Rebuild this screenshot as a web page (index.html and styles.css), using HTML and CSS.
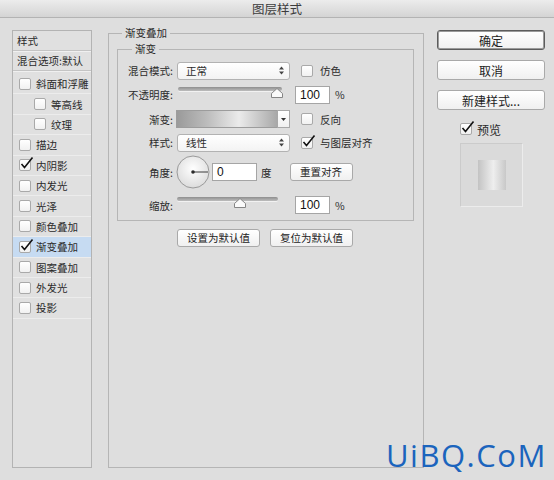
FILE: index.html
```html
<!DOCTYPE html>
<html lang="zh-CN">
<head>
  <meta charset="UTF-8" />
  <title>图层样式</title>
  <link rel="stylesheet" href="styles.css">
</head>
<body>

<div class="window">
  <div class="titlebar">图层样式</div>

  <div class="content">
    <!-- styles list -->
    <div class="styles-list">
      <div class="list-head">样式</div>
      <div class="list-head">混合选项:默认</div>
      <div class="list-items">
        <div class="item"><span class="box"></span>斜面和浮雕</div>
        <div class="item sub"><span class="box"></span>等高线</div>
        <div class="item sub"><span class="box"></span>纹理</div>
        <div class="item"><span class="box"></span>描边</div>
        <div class="item"><span class="box checked"><svg viewBox="0 0 15 15"><path d="M2.5 8 L5.5 11.5 L13.5 1.5"/></svg></span>内阴影</div>
        <div class="item"><span class="box"></span>内发光</div>
        <div class="item"><span class="box"></span>光泽</div>
        <div class="item"><span class="box"></span>颜色叠加</div>
        <div class="item selected"><span class="box checked"><svg viewBox="0 0 15 15"><path d="M2.5 8 L5.5 11.5 L13.5 1.5"/></svg></span>渐变叠加</div>
        <div class="item"><span class="box"></span>图案叠加</div>
        <div class="item"><span class="box"></span>外发光</div>
        <div class="item"><span class="box"></span>投影</div>
      </div>
    </div>

    <!-- settings -->
    <fieldset class="group effect">
      <legend>渐变叠加</legend>
      <fieldset class="group gradient-group">
        <legend>渐变</legend>
        <div class="fields">
          <div class="row">
            <span class="label">混合模式:</span>
            <div class="select">正常
              <svg class="arrows" viewBox="0 0 5 9"><polygon points="0,3.5 2.5,0.5 5,3.5"/><polygon points="0,5.5 2.5,8.5 5,5.5"/></svg>
            </div>
            <span class="box side"></span><span class="opt">仿色</span>
          </div>
          <div class="row">
            <span class="label">不透明度:</span>
            <div class="slider opacity">
              <div class="track"></div>
              <svg class="thumb" style="left: 93px" viewBox="0 0 12 10"><path d="M0.5 9.5 V5.5 L6 0.5 L11.5 5.5 V9.5 Z"/></svg>
            </div>
            <div class="field num">100</div><span class="unit">%</span>
          </div>
          <div class="row">
            <span class="label">渐变:</span>
            <div class="swatch"></div>
            <div class="drop"><svg viewBox="0 0 5 3"><polygon points="0,0 5,0 2.5,3"/></svg></div>
            <span class="box side"></span><span class="opt">反向</span>
          </div>
          <div class="row">
            <span class="label">样式:</span>
            <div class="select">线性
              <svg class="arrows" viewBox="0 0 5 9"><polygon points="0,3.5 2.5,0.5 5,3.5"/><polygon points="0,5.5 2.5,8.5 5,5.5"/></svg>
            </div>
            <span class="box side checked"><svg viewBox="0 0 15 15"><path d="M2.5 8 L5.5 11.5 L13.5 1.5"/></svg></span><span class="opt">与图层对齐</span>
          </div>
          <div class="row">
            <span class="label">角度:</span>
            <svg class="dial" viewBox="0 0 34 34">
              <defs>
                <radialGradient id="dialFill" cx="50%" cy="40%" r="60%">
                  <stop offset="0" stop-color="#ffffff"/>
                  <stop offset="1" stop-color="#dcdcdc"/>
                </radialGradient>
              </defs>
              <circle cx="17" cy="17" r="16" fill="url(#dialFill)" stroke="#9a9a9a"/>
              <line x1="17" y1="17" x2="32" y2="17" stroke="#3a3a3a" stroke-width="1"/>
              <circle cx="17" cy="17" r="1.8" fill="#2a2a2a"/>
            </svg>
            <div class="field angle">0</div><span class="unit deg">度</span>
            <button class="btn small align">重置对齐</button>
          </div>
          <div class="row">
            <span class="label">缩放:</span>
            <div class="slider scale">
              <div class="track"></div>
              <svg class="thumb" style="left: 57px" viewBox="0 0 12 10"><path d="M0.5 9.5 V5.5 L6 0.5 L11.5 5.5 V9.5 Z"/></svg>
            </div>
            <div class="field num">100</div><span class="unit">%</span>
          </div>
        </div>
      </fieldset>
      <div class="defaults">
        <button class="btn small">设置为默认值</button>
        <button class="btn small">复位为默认值</button>
      </div>
    </fieldset>

    <!-- actions -->
    <div class="actions">
      <button class="btn main">确定</button>
      <button class="btn">取消</button>
      <button class="btn">新建样式...</button>
      <div class="preview-check"><span class="box checked"><svg viewBox="0 0 15 15"><path d="M2.5 8 L5.5 11.5 L13.5 1.5"/></svg></span>预览</div>
      <div class="preview"><div class="preview-swatch"></div></div>
    </div>
  </div>

  <div class="watermark">UiBQ.CoM</div>
</div>

</body>
</html>
```

FILE: styles.css
```css
* {
  box-sizing: border-box;
}

body {
  margin: 0;
  background-color: #dedede;
  font-family: "Noto Sans CJK SC", "Liberation Sans", sans-serif;
  font-size: 10.5px;
  color: #2b2b2b;
}

.window {
  position: relative;
  width: 554px;
  height: 480px;
  overflow: hidden;
}

.titlebar {
  height: 18px;
  line-height: 17px;
  text-align: center;
  font-size: 12.5px;
  color: #3c3c3c;
  background: linear-gradient(#ececec, #d4d4d4);
  border-bottom: 1px solid #b3b3b3;
}

.content {
  display: flex;
  height: 462px;
  padding: 8px 0 12px 12px;
}

/* left list */
.styles-list {
  width: 80px;
  margin: 4px 16px 0 0;
  border: 1px solid #b3b3b3;
  background-color: #e0e0e0;
}

.list-head {
  height: 20px;
  line-height: 19px;
  padding-left: 4px;
  border-bottom: 1px solid #c4c4c4;
  box-shadow: 0 1px 0 #f0f0f0;
}

.list-items {
  margin-top: 3px;
}

.item {
  display: flex;
  align-items: center;
  gap: 5px;
  height: 20.4px;
  padding-left: 6px;
  border-bottom: 1px solid #ececec;
}

.item.sub {
  padding-left: 21px;
}

.item.selected {
  background-color: #c6dbf2;
}

.box {
  position: relative;
  flex: none;
  width: 12px;
  height: 12px;
  border: 1px solid #a9a9a9;
  border-radius: 2px;
  background: linear-gradient(#ffffff, #f1f1f1);
}

.box svg {
  position: absolute;
  left: -1px;
  top: -4px;
  width: 15px;
  height: 15px;
  overflow: visible;
}

.box svg path {
  fill: none;
  stroke: #111;
  stroke-width: 1.6;
}

/* fieldsets */
.group {
  margin: 0;
  padding: 0;
  min-width: 0;
  border: 1px solid #b5b5b5;
}

.group legend {
  padding: 0 3px;
  line-height: 14px;
}

.effect {
  width: 316px;
  display: block;
}

.effect > legend {
  margin-left: 13px;
}

.gradient-group {
  margin: 2px 9px 0 8px;
}

.gradient-group > legend {
  margin-left: 14px;
}

.fields {
  display: grid;
  grid-template-rows: 23px 25px 24px 23px 36px 30px;
  padding-top: 3px;
}

.row {
  display: flex;
  align-items: center;
}

.label {
  width: 55px;
  text-align: right;
  flex: none;
}

.select {
  position: relative;
  width: 113px;
  height: 18px;
  margin-left: 4px;
  padding-left: 8px;
  line-height: 16px;
  background: linear-gradient(#ffffff, #f3f3f3);
  border: 1px solid #b2b2b2;
  border-radius: 3px;
}

.arrows {
  position: absolute;
  right: 5px;
  top: 3px;
  width: 5px;
  height: 9px;
  fill: #444;
}

.box.side {
  margin-left: 11px;
}

.opt {
  margin-left: 7px;
}

.slider {
  position: relative;
  height: 20px;
}

.slider.opacity {
  width: 104px;
  margin-left: 5px;
}

.slider.scale {
  width: 101px;
  margin-left: 4px;
}

.track {
  position: absolute;
  left: 0;
  right: 0;
  top: 2px;
  height: 4px;
  border-radius: 2px;
  background: linear-gradient(#8e8e8e, #bdbdbd);
  box-shadow: 0 1px 0 #f2f2f2;
}

.thumb {
  position: absolute;
  top: 3px;
  width: 12px;
  height: 10px;
  fill: #fafafa;
  stroke: #858585;
}

.field {
  height: 18px;
  line-height: 17px;
  padding-left: 4px;
  background-color: #fff;
  border: 1px solid #a5a5a5;
  font-family: "Liberation Sans", sans-serif;
  font-size: 12px;
  color: #111;
}

.field.num {
  width: 35px;
  margin-left: 13px;
}

.slider.scale + .field.num {
  margin-left: 17px;
}

.unit {
  margin-left: 5px;
}

.unit.deg {
  margin-left: 4px;
}

.swatch {
  width: 101px;
  height: 18px;
  margin-left: 3px;
  border: 1px solid #9c9c9c;
  border-right: none;
  background: linear-gradient(to right, #9a9a9a, #bcbcbc 30%, #ebebeb 62%, #a8a8a8);
}

.drop {
  display: flex;
  align-items: center;
  justify-content: center;
  width: 13px;
  height: 18px;
  background: linear-gradient(#ffffff, #f0f0f0);
  border: 1px solid #a8a8a8;
}

.drop svg {
  width: 5px;
  height: 3px;
  fill: #333;
}

.dial {
  width: 34px;
  height: 34px;
  margin-left: 3px;
}

.field.angle {
  width: 45px;
  margin-left: 2px;
}

.btn {
  height: 20px;
  padding: 0;
  font-family: inherit;
  font-size: 12px;
  color: #222;
  background: linear-gradient(#ffffff, #f0f0f0);
  border: 1px solid #a9a9a9;
  border-radius: 3px;
}

.btn.small {
  width: 83px;
  height: 18px;
  font-size: 10.5px;
  line-height: 14px;
}

.btn.align {
  width: 63px;
  margin-left: 18px;
}

.defaults {
  display: flex;
  gap: 10px;
  margin: 8px 0 0 68px;
}

/* right column */
.actions {
  display: flex;
  flex-direction: column;
  width: 108px;
  margin: 4px 0 0 13px;
}

.actions .btn + .btn {
  margin-top: 10px;
}

.btn.main {
  border-color: #5c5c5c;
  box-shadow: inset 0 0 0 1px #9a9a9a;
}

.preview-check {
  display: flex;
  align-items: center;
  gap: 5px;
  height: 14px;
  margin: 12px 0 0 23px;
  font-size: 12px;
}

.preview {
  display: flex;
  align-items: center;
  justify-content: center;
  width: 63px;
  height: 64px;
  margin: 7px 0 0 23px;
  background-color: #dadada;
  border: 1px solid #cbcbcb;
  border-bottom-color: #ececec;
  border-right-color: #ececec;
}

.preview-swatch {
  width: 28px;
  height: 30px;
  background: linear-gradient(to right, #c3c3c3, #eeeeee 55%, #c8c8c8);
}

.watermark {
  position: absolute;
  left: 386px;
  top: 440px;
  line-height: 1;
  font-family: "Open Sans", sans-serif;
  font-size: 31px;
  letter-spacing: 1.5px;
  color: #1b64bd;
}
```
